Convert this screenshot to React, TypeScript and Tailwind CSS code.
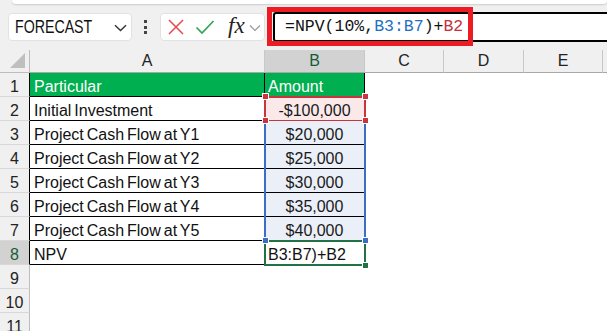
import React from "react";

const gridCols = "grid grid-cols-[30px_235px_100px_79px_80px_79px_34px]";

const rows: { a: string; b: string }[] = [
  { a: "Particular", b: "Amount" },
  { a: "Initial Investment", b: "-$100,000" },
  { a: "Project Cash Flow at Y1", b: "$20,000" },
  { a: "Project Cash Flow at Y2", b: "$25,000" },
  { a: "Project Cash Flow at Y3", b: "$30,000" },
  { a: "Project Cash Flow at Y4", b: "$35,000" },
  { a: "Project Cash Flow at Y5", b: "$40,000" },
  { a: "NPV", b: "B3:B7)+B2" },
];

function Sq({ pos, color }: { pos: string; color: string }) {
  return <div className={`absolute z-10 w-[7px] h-[7px] border border-white ${pos} ${color}`} />;
}

function BCell({ r, text }: { r: number; text: string }) {
  if (r === 1) {
    return (
      <div className="relative h-[24px] bg-[#00b050] border-r border-b border-black text-white pl-[3px] pt-[3px] leading-[21px]">
        {text}
      </div>
    );
  }
  if (r === 2) {
    return (
      <div className="relative h-[24px] bg-[#fbe9ea] border-r border-b border-black text-center text-[#1a1a1a] pt-[3px] leading-[21px]">
        {text}
        <div className="absolute -left-[1px] -top-[1px] -right-[2px] -bottom-[2px] border-2 border-[#c9343d]" />
        <Sq pos="-left-[3px] -top-[4px]" color="bg-[#c9343d]" />
        <Sq pos="-right-[5px] -top-[4px]" color="bg-[#c9343d]" />
        <Sq pos="-left-[3px] -bottom-[4px]" color="bg-[#c9343d]" />
        <Sq pos="-right-[5px] -bottom-[4px]" color="bg-[#c9343d]" />
      </div>
    );
  }
  if (r >= 3 && r <= 7) {
    return (
      <div className="relative h-[24px] bg-[#eaeff8] border-r border-b border-black text-center text-[#1a1a1a] pt-[3px] leading-[21px]">
        {text}
        <div
          className={`absolute -left-[1px] -right-[2px] ${r === 3 ? "top-0" : "-top-[1px]"} ${
            r === 7 ? "-bottom-[2px] border-b-2" : "-bottom-[1px]"
          } border-x-2 border-[#3b6fc6]`}
        />
        {r === 7 && (
          <>
            <Sq pos="-left-[3px] -bottom-[4px]" color="bg-[#3b6fc6]" />
            <Sq pos="-right-[5px] -bottom-[4px]" color="bg-[#3b6fc6]" />
          </>
        )}
      </div>
    );
  }
  return (
    <div className="relative h-[24px] bg-white border-r border-b border-black text-[#111] pl-[3px] pt-[3px] leading-[21px]">
      {text}
      <div className="absolute -left-[1px] -top-[1px] -right-[2px] -bottom-[2px] border-2 border-[#217346]" />
      <Sq pos="-right-[5px] -bottom-[5px]" color="bg-[#217346]" />
    </div>
  );
}

export default function App() {
  return (
    <div className="relative w-[607px] h-[331px] overflow-hidden bg-white font-['Liberation_Sans',Arial,sans-serif] text-[16px]">
      {/* Toolbar */}
      <div className="h-[50px] bg-[#f0f0f0] overflow-hidden">
        <div className="ml-[12px] h-[4px] bg-white rounded-b-[6px] shadow-[0_1px_2px_rgba(0,0,0,0.15)]" />
        <div className="mt-[8px] h-[30px] flex items-center">
          {/* Name box */}
          <div className="ml-[8px] w-[124px] h-[28px] bg-white rounded-[4px] border border-[#e2e2e2] flex items-center justify-between pl-[6px] pr-[4px]">
            <span className="inline-block scale-y-[1.25] text-[14.2px] text-[#111] leading-none pt-[1px]">
              FORECAST
            </span>
            <svg width="13" height="8" viewBox="0 0 13 8" className="mt-[2px]">
              <path d="M1 1.2 L6.5 6.5 L12 1.2" fill="none" stroke="#333" strokeWidth="1.4" />
            </svg>
          </div>
          {/* Dots */}
          <div className="ml-[12px] flex flex-col gap-[2.5px]">
            <div className="w-[3px] h-[3px] bg-[#444]" />
            <div className="w-[3px] h-[3px] bg-[#444]" />
            <div className="w-[3px] h-[3px] bg-[#444]" />
          </div>
          {/* Buttons */}
          <div className="ml-[13px] w-[105px] h-[28px] bg-white rounded-[4px] border border-[#e2e2e2] flex items-center">
            <svg width="18" height="18" viewBox="0 0 18 18" className="ml-[6px]">
              <path d="M2 2 L16 16 M16 2 L2 16" stroke="#e5484d" strokeWidth="1.5" fill="none" />
            </svg>
            <svg width="20" height="16" viewBox="0 0 20 16" className="ml-[10px]">
              <path d="M1.5 8.5 L7 14 L18.5 2" stroke="#35a356" strokeWidth="1.7" fill="none" />
            </svg>
            <span className="ml-[13px] font-['Liberation_Serif',serif] italic text-[23px] leading-none text-[#222] pb-[3px]">
              fx
            </span>
            <svg width="12" height="8" viewBox="0 0 12 8" className="ml-[4px] mt-[2px]">
              <path d="M1 1.5 L6 6.5 L11 1.5" fill="none" stroke="#999" strokeWidth="1.2" />
            </svg>
          </div>
          {/* Formula input */}
          <div className="ml-[8px] flex-1 h-[30px] bg-white border-2 border-r-0 border-black rounded-l-[3px] flex items-center pl-[10px]">
            <span className="font-['Liberation_Mono',monospace] text-[16.5px] leading-none text-[#111]">
              =NPV(10%,<span className="text-[#1f6fc5]">B3:B7</span>)+<span className="text-[#c7313b]">B2</span>
            </span>
          </div>
        </div>
      </div>

      {/* Red annotation */}
      <div className="absolute left-[267px] top-[7px] w-[206px] h-[39px] border-[5px] border-[#ed1c24]" />

      {/* Column headers */}
      <div className={`${gridCols} h-[23px] bg-[#f0f0f0] leading-[22px] text-[#222]`}>
        <div className="relative border-r border-b border-[#bdbdbd]">
          <svg width="16" height="16" viewBox="0 0 16 16" className="absolute right-[3px] bottom-[3px]">
            <path d="M15 0 L15 15 L0 15 Z" fill="#bfbfbf" />
          </svg>
        </div>
        <div className="text-center border-r border-b border-[#c8c8c8] border-b-[#a8a8a8]">A</div>
        <div className="text-center bg-[#d2d2d2] text-[#185c37] border-r border-b border-[#c8c8c8] border-b-[#a8a8a8]">B</div>
        <div className="text-center border-r border-b border-[#c8c8c8] border-b-[#a8a8a8]">C</div>
        <div className="text-center border-r border-b border-[#c8c8c8] border-b-[#a8a8a8]">D</div>
        <div className="text-center border-r border-b border-[#c8c8c8] border-b-[#a8a8a8]">E</div>
        <div className="border-b border-[#a8a8a8]" />
      </div>

      {/* Rows */}
      {Array.from({ length: 11 }, (_, i) => i + 1).map((r) => {
        const data = rows[r - 1];
        const selRow = r === 8;
        return (
          <div key={r} className={`${gridCols} h-[24px]`}>
            <div
              className={`h-[24px] text-center pt-[3px] leading-[21px] border-b border-[#d8d8d8] border-r ${
                data ? "border-r-black" : "border-r-[#bdbdbd]"
              } ${selRow ? "bg-[#d2d2d2] text-[#185c37]" : "bg-[#f0f0f0] text-[#222]"}`}
            >
              {r}
            </div>
            {data ? (
              <>
                <div
                  className={`h-[24px] border-r border-b border-black pl-[4px] pt-[3px] leading-[21px] [word-spacing:-1.5px] whitespace-nowrap ${
                    r === 1 ? "bg-[#00b050] text-white" : "bg-white text-[#111]"
                  }`}
                >
                  {data.a}
                </div>
                <BCell r={r} text={data.b} />
              </>
            ) : (
              <>
                <div />
                <div />
              </>
            )}
            <div />
            <div />
            <div />
            <div />
          </div>
        );
      })}
    </div>
  );
}
